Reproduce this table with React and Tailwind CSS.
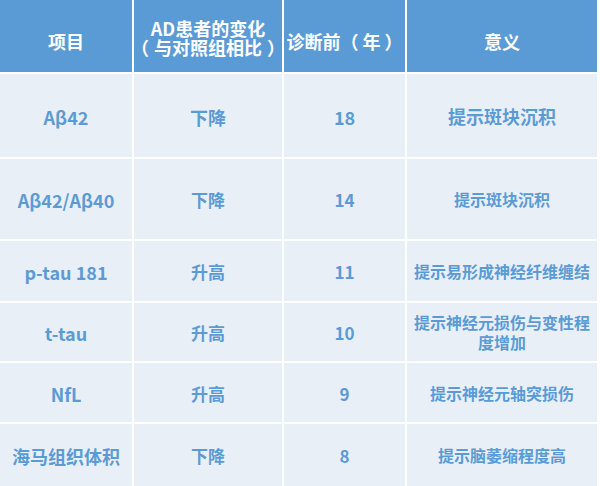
import React from 'react';

const rows = [
  { item: 'Aβ42', change: '下降', years: '18', meaning: '提示斑块沉积', size: 'text-[18px]', meanSize: 'text-[18px]' },
  { item: 'Aβ42/Aβ40', change: '下降', years: '14', meaning: '提示斑块沉积', size: 'text-[17px]', meanSize: 'text-[16px]' },
  { item: 'p-tau 181', change: '升高', years: '11', meaning: '提示易形成神经纤维缠结', size: 'text-[17px]', meanSize: 'text-[16px]' },
  { item: 't-tau', change: '升高', years: '10', meaning: '提示神经元损伤与变性程度增加', size: 'text-[17px]', meanSize: 'text-[16px]' },
  { item: 'NfL', change: '升高', years: '9', meaning: '提示神经元轴突损伤', size: 'text-[17px]', meanSize: 'text-[16px]' },
  { item: '海马组织体积', change: '下降', years: '8', meaning: '提示脑萎缩程度高', size: 'text-[17px]', meanSize: 'text-[16px]' },
];

const font = { fontFamily: '"Noto Sans CJK SC", "Noto Sans", sans-serif' };

const headCell = 'bg-[#5b9bd5] text-white text-[18px] leading-[19px] flex flex-col items-center justify-center text-center';

const App = () => {
  return (
    <div className="w-[600px] h-[486px] bg-white pr-[3px]" style={font}>
      <div className="grid grid-cols-[132px_148px_121px_190px] grid-rows-[72px_83px_80px_60px_58px_59px_62px] gap-[2px] font-bold">
        <div className={`${headCell} pt-[10px]`}>项目</div>
        <div className={`${headCell} pt-[4px]`}>
          <span className="whitespace-nowrap">AD患者的变化</span>
          <span className="whitespace-nowrap">
            （<span className="px-[5px]">与对照组相比</span>）
          </span>
        </div>
        <div className={`${headCell} pt-[10px]`}>
          <span className="whitespace-nowrap">
            诊断前（<span className="px-[4px]">年</span>）
          </span>
        </div>
        <div className={`${headCell} pt-[10px]`}>意义</div>
        {rows.map((r) => (
          <React.Fragment key={r.item}>
            <div className="bg-[#e9eff7] text-[#5b9bd5] text-[18px] leading-[20px] flex items-center justify-center text-center pt-[2px]">
              {r.item}
            </div>
            <div className={`bg-[#e9eff7] text-[#5b9bd5] ${r.size} leading-[20px] flex items-center justify-center text-center pt-[2px]`}>
              {r.change}
            </div>
            <div className={`bg-[#e9eff7] text-[#5b9bd5] ${r.size} leading-[20px] flex items-center justify-center text-center pt-[2px]`}>
              {r.years}
            </div>
            <div className={`bg-[#e9eff7] text-[#5b9bd5] ${r.meanSize} leading-[20px] flex items-center justify-center text-center px-[3px]`}>
              {r.meaning}
            </div>
          </React.Fragment>
        ))}
      </div>
    </div>
  );
};

export default App;
